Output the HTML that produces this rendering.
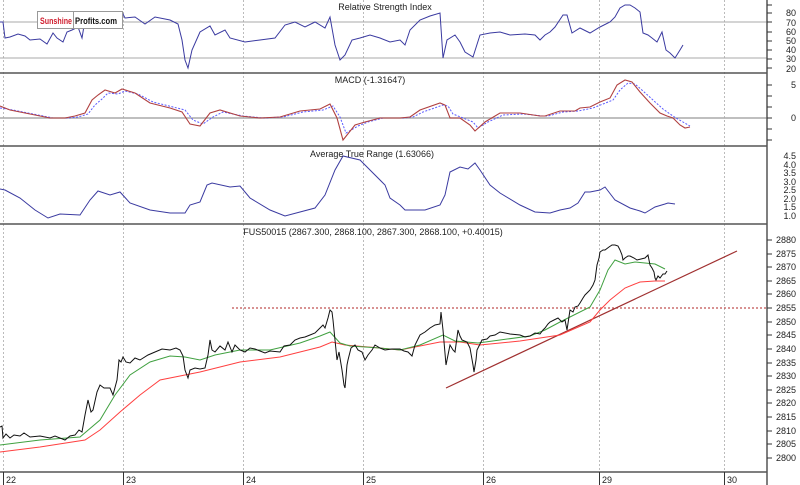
<!DOCTYPE html>
<html><head><meta charset="utf-8"><style>
html,body{margin:0;padding:0;background:#fff;width:800px;height:485px;overflow:hidden}
svg{display:block}
text{font-family:"Liberation Sans",sans-serif;font-size:9px;fill:#222}
.ax text{text-anchor:end}
</style></head><body>
<svg width="800" height="485" viewBox="0 0 800 485">
<rect width="800" height="485" fill="#fff"/>
<g stroke="#bbb" stroke-dasharray="2,2" stroke-width="1">
<line x1="3.5" y1="0" x2="3.5" y2="472"/><line x1="123.5" y1="0" x2="123.5" y2="472"/>
<line x1="243.5" y1="0" x2="243.5" y2="472"/><line x1="363.5" y1="0" x2="363.5" y2="472"/>
<line x1="483.5" y1="0" x2="483.5" y2="472"/><line x1="599.5" y1="0" x2="599.5" y2="472"/>
<line x1="724.5" y1="0" x2="724.5" y2="472"/>
</g>
<g stroke="#aaa" stroke-width="1">
<line x1="0" y1="22" x2="767" y2="22"/><line x1="0" y1="58" x2="767" y2="58"/>
</g>
<line x1="0" y1="118" x2="767" y2="118" stroke="#aaa" stroke-width="1.5"/>
<g stroke="#555" stroke-width="1.5">
<line x1="0" y1="73" x2="767" y2="73"/><line x1="0" y1="146" x2="767" y2="146"/>
<line x1="0" y1="224" x2="767" y2="224"/><line x1="0" y1="472" x2="767" y2="472"/>
<line x1="767" y1="0" x2="767" y2="485"/>
</g>
<polyline fill="none" stroke="#3a3aa0" stroke-width="1" points="0,22 3,22 5,38 10,37 18,34 25,36 30,40 40,39 47,44 53,33 57,38 63,42 67,32 72,30 78,27 82,38 85,20 95,18 110,15 122,12 125,18 135,17 145,24 155,17 170,20 178,24 182,40 185,60 188,68 192,50 200,32 210,26 215,35 225,30 230,38 245,42 260,40 275,38 285,25 295,22 305,27 315,22 325,28 330,17 335,45 340,60 345,55 352,40 360,38 370,35 380,38 390,42 400,40 405,45 410,30 420,20 430,16 440,13 443,58 447,40 455,35 460,42 465,52 473,57 480,35 490,33 500,32 510,35 525,34 535,35 540,40 545,35 550,32 555,27 563,15 567,15 572,33 580,28 590,33 600,27 610,22 615,17 620,8 625,5 630,5 635,8 640,12 643,33 648,35 652,38 657,42 662,32 666,50 670,53 675,58 680,50 683,45"/>
<polyline fill="none" stroke="#5a5aff" stroke-width="1" stroke-dasharray="2,1.5" points="0,108 13,110 33,114 53,118 68,118 78,117 88,114 95,105 102,99 108,93 118,94 125,91 138,94 153,102 173,107 185,110 193,120 203,124 213,117 223,112 243,116 263,118 283,117 303,112 323,110 333,106 340,117 346,133 358,126 368,122 383,118 403,118 413,117 423,112 443,105 448,106 453,114 463,118 473,122 478,128 488,122 503,115 523,114 543,116 548,116 563,112 578,111 583,110 593,108 603,104 613,100 620,90 628,83 635,84 643,91 653,100 663,109 670,114 676,118 683,122 690,126"/>
<polyline fill="none" stroke="#b04040" stroke-width="1.1" points="0,106 10,110 30,114 50,118 65,118 75,116 85,113 92,100 98,95 105,90 115,93 122,89 135,93 150,103 170,108 182,112 190,124 200,126 210,113 220,110 240,116 260,118 280,117 300,111 320,109 330,104 337,118 343,140 355,125 365,122 380,118 400,118 410,117 420,110 440,103 445,105 450,118 460,118 470,125 475,131 485,122 500,113 520,113 540,116 545,116 560,111 575,111 580,108 590,107 600,102 610,98 617,85 625,80 632,82 640,92 650,103 660,113 667,116 673,118 680,125 685,128 690,127"/>
<polyline fill="none" stroke="#3a3aa0" stroke-width="1" points="0,189 5,190 20,198 35,210 48,218 60,214 80,215 90,200 98,191 110,195 120,192 130,203 150,210 170,213 185,213 190,205 200,202 207,185 212,183 230,187 240,186 250,198 270,210 285,216 300,212 315,208 325,195 335,170 343,156 360,160 370,170 385,185 390,198 400,205 405,210 415,210 425,210 440,205 445,195 450,172 460,167 468,169 475,163 480,170 490,185 500,193 520,205 535,212 550,213 560,210 570,208 578,203 585,192 590,192 600,190 605,187 615,200 630,208 640,211 645,213 655,207 665,204 668,203 675,204"/>
<line x1="232" y1="308" x2="767" y2="308" stroke="#c05050" stroke-width="1.2" stroke-dasharray="2,2"/>
<line x1="446" y1="388" x2="737" y2="251" stroke="#a03030" stroke-width="1.2"/>
<polyline fill="none" stroke="#ff4040" stroke-width="1" points="0,452 40,447 85,440 100,430 120,412 140,395 160,380 185,375 200,372 240,362 280,357 320,347 332,342 345,345 380,348 400,350 440,342 460,342 480,345 520,341 560,335 590,322 600,310 610,300 625,288 640,282 655,281 665,281"/>
<polyline fill="none" stroke="#40a040" stroke-width="1" points="0,445 40,440 80,437 100,420 115,395 130,375 150,362 170,356 185,357 200,360 215,355 240,350 270,350 300,343 320,336 330,332 340,343 350,346 380,348 400,350 420,345 443,335 455,341 478,343 500,340 530,336 545,330 560,322 590,307 600,290 608,270 615,260 625,264 635,262 655,264 665,269"/>
<polyline fill="none" stroke="#111" stroke-width="1" points="0,427 2,426 3,438 6,434 10,438 14,435 20,436 24,433 30,437 40,436 50,438 55,436 65,440 70,436 75,435 79,430 82,432 85,415 88,400 91,412 93,410 97,392 100,385 104,388 110,388 113,395 117,380 119,360 121,362 123,357 126,362 130,363 135,358 140,360 148,355 155,352 162,349 170,350 176,348 180,350 183,356 185,370 188,378 190,370 195,368 200,369 205,368 208,355 210,340 212,350 215,352 220,346 225,350 228,342 232,352 235,345 240,350 245,352 250,348 255,349 260,351 265,353 270,351 280,352 284,346 290,345 295,340 300,338 305,337 310,335 315,333 320,328 323,325 325,328 328,318 330,310 332,312 333,320 335,340 337,360 339,352 342,370 344,385 345,388 347,365 348,360 351,348 355,345 358,350 362,352 365,360 368,355 372,350 375,345 380,348 385,350 392,349 400,349 404,351 408,352 412,356 415,345 420,335 425,332 430,328 435,325 440,324 441,312 443,330 446,365 448,355 450,345 453,350 455,352 458,330 460,336 462,340 467,342 470,348 473,365 474,372 476,360 477,350 480,344 482,340 487,339 490,336 495,335 500,332 510,334 520,335 525,337 530,336 535,333 540,334 543,330 545,328 548,324 550,322 554,320 558,318 562,322 565,320 567,330 570,310 573,312 575,307 578,306 580,303 583,298 585,295 588,292 590,290 593,285 595,280 597,265 599,258 600,252 603,250 605,250 609,247 612,245 615,245 618,246 620,250 622,255 623,260 625,258 628,256 630,256 634,258 637,260 641,259 645,258 648,255 650,265 652,268 654,272 655,278 656,280 658,276 660,278 663,274 665,274 667,271"/>
<text x="385" y="10" text-anchor="middle">Relative Strength Index</text>
<text x="370" y="83" text-anchor="middle">MACD (-1.31647)</text>
<text x="372" y="157" text-anchor="middle">Average True Range (1.63066)</text>
<text x="373" y="235" text-anchor="middle">FUS50015 (2867.300, 2868.100, 2867.300, 2868.100, +0.40015)</text>
<rect x="37.5" y="11.5" width="85" height="17" fill="#fff" stroke="#999"/>
<text x="40" y="24" textLength="32" lengthAdjust="spacingAndGlyphs" style="font-size:9.5px;font-weight:bold;fill:#d02030">Sunshine</text>
<line x1="73.5" y1="12" x2="73.5" y2="28" stroke="#999"/>
<text x="75" y="24" textLength="42" lengthAdjust="spacingAndGlyphs" style="font-size:9.5px;font-weight:bold;fill:#111">Profits.com</text>
<g stroke="#333" stroke-width="1">
<path d="M767 5h5M767 13h5M767 22h5M767 32h5M767 41h5M767 50h5M767 59h5M767 68h5M767 85h5M767 96h5M767 107h5M767 118h5M767 129h5M767 140h5"/>
<path d="M767 240h5M767 254h5M767 267h5M767 281h5M767 294h5M767 308h5M767 322h5M767 335h5M767 349h5M767 363h5M767 376h5M767 390h5M767 403h5M767 417h5M767 431h5M767 444h5M767 458h5"/>
</g>
<g class="ax">
<text x="796" y="16">80</text><text x="796" y="26">70</text><text x="796" y="35">60</text><text x="796" y="44">50</text><text x="796" y="53">40</text><text x="796" y="62">30</text><text x="796" y="72">20</text>
<text x="796" y="88">5</text><text x="796" y="121">0</text>
<text x="796" y="159">4.5</text><text x="796" y="168">4.0</text><text x="796" y="176">3.5</text><text x="796" y="185">3.0</text><text x="796" y="193">2.5</text><text x="796" y="202">2.0</text><text x="796" y="210">1.5</text><text x="796" y="219">1.0</text>
<text x="796" y="243">2880</text><text x="796" y="257">2875</text><text x="796" y="270">2870</text><text x="796" y="284">2865</text><text x="796" y="297">2860</text><text x="796" y="311">2855</text><text x="796" y="325">2850</text><text x="796" y="338">2845</text><text x="796" y="352">2840</text><text x="796" y="366">2835</text><text x="796" y="379">2830</text><text x="796" y="393">2825</text><text x="796" y="406">2820</text><text x="796" y="420">2815</text><text x="796" y="434">2810</text><text x="796" y="447">2805</text><text x="796" y="461">2800</text>
</g>
<g stroke="#333"><path d="M3.5 472v13M123.5 472v13M243.5 472v13M363.5 472v13M483.5 472v13M599.5 472v13M724.5 472v13"/></g>
<text x="6" y="483">22</text><text x="126" y="483">23</text><text x="246" y="483">24</text><text x="366" y="483">25</text><text x="486" y="483">26</text><text x="602" y="483">29</text><text x="727" y="483">30</text>
</svg>
</body></html>
